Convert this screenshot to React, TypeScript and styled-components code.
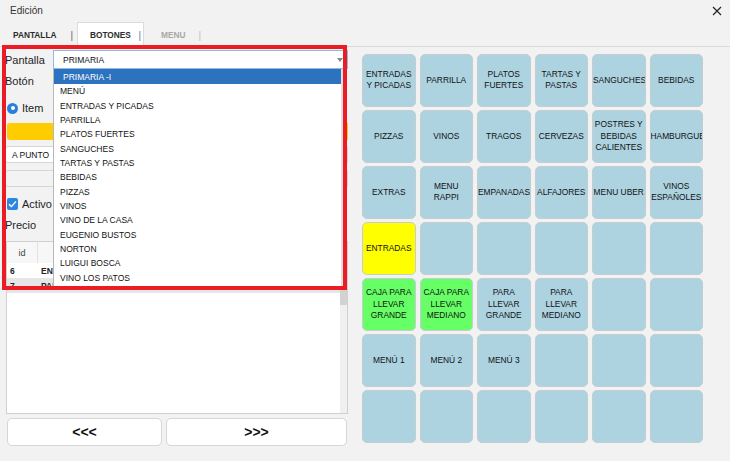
import React from "react";
import styled, { createGlobalStyle } from "styled-components";

const GlobalStyle = createGlobalStyle`
  html, body {
    margin: 0;
    padding: 0;
    background: #f2f2f2;
    font-family: "Liberation Sans", Arial, sans-serif;
  }
  * {
    box-sizing: border-box;
  }
`;

const Window = styled.div`
  width: 730px;
  height: 461px;
  overflow: hidden;
  display: flex;
  flex-direction: column;
  background: #f2f2f2;
`;

const TitleBar = styled.div`
  height: 20px;
  display: flex;
  align-items: center;
  justify-content: space-between;
  padding: 0 8px 0 10px;
`;

const Title = styled.span`
  font-size: 10px;
  color: #333;
`;

const CloseButton = styled.button`
  border: 0;
  background: transparent;
  padding: 0;
  width: 10px;
  height: 10px;
  display: flex;
  margin-top: 1px;
`;

const TabBar = styled.div`
  height: 27px;
  padding-top: 2px;
  display: flex;
  border-bottom: 1px solid #dadada;
`;

const Tab = styled.div<{ $w: number; $pl: number; $active?: boolean }>`
  width: ${(p) => p.$w}px;
  padding-left: ${(p) => p.$pl}px;
  display: flex;
  align-items: center;
  background: ${(p) => (p.$active ? "#fff" : "transparent")};
  border: 1px solid ${(p) => (p.$active ? "#dcdcdc" : "transparent")};
  border-bottom: 0;
  margin-bottom: -1px;
`;

const TabLabel = styled.span<{ $muted?: boolean }>`
  font-size: 8.3px;
  font-weight: bold;
  color: ${(p) => (p.$muted ? "#a8a8a8" : "#2b2b2b")};
`;

const Sep = styled.span<{ $mr: number; $color: string }>`
  margin-left: auto;
  margin-right: ${(p) => p.$mr}px;
  font-size: 10px;
  color: ${(p) => p.$color};
`;

const Body = styled.div`
  flex: 1;
  display: flex;
`;

const LeftPanel = styled.div`
  width: 348px;
  position: relative;
  padding: 3px 0 0 5px;
  display: flex;
  flex-direction: column;
`;

const Row = styled.div<{ $h: number; $mt?: number }>`
  height: ${(p) => p.$h}px;
  margin-top: ${(p) => p.$mt || 0}px;
  display: flex;
  align-items: center;
`;

const Label = styled.span<{ $w?: number }>`
  width: ${(p) => (p.$w ? `${p.$w}px` : "auto")};
  font-size: 11px;
  color: #1e1e1e;
`;

const SelectBox = styled.div`
  flex: 1;
  height: 19px;
  background: #fff;
  border: 1px solid #8dbbe6;
  display: flex;
  align-items: center;
  justify-content: space-between;
  padding: 0 4px 0 9px;
  font-size: 8.5px;
  color: #111;
`;

const Arrow = styled.span`
  width: 0;
  height: 0;
  border-left: 3px solid transparent;
  border-right: 3px solid transparent;
  border-top: 4px solid #888;
`;

const Radio = styled.span`
  width: 11px;
  height: 11px;
  border-radius: 50%;
  background: #2a7fd8;
  display: flex;
  align-items: center;
  justify-content: center;
  margin: 0 4px 0 2px;
  &::after {
    content: "";
    width: 4px;
    height: 4px;
    border-radius: 50%;
    background: #fff;
  }
`;

const Check = styled.span`
  width: 11px;
  height: 12px;
  border-radius: 2px;
  background: #2f86dd;
  display: flex;
  align-items: center;
  justify-content: center;
  margin: 0 4px 0 2px;
`;

const ColorBar = styled.div`
  height: 17px;
  margin: 7px 0 0 2px;
  background: #ffcc00;
  border-radius: 3px 0 0 3px;
`;

const FieldBox = styled.div<{ $mt: number; $bg: string }>`
  height: 17px;
  margin-top: ${(p) => p.$mt}px;
  background: ${(p) => p.$bg};
  border: 1px solid #d6d6d6;
  border-radius: 3px 0 0 3px;
  display: flex;
  align-items: center;
  padding-left: 6px;
  font-size: 8.5px;
  color: #111;
`;

const Table = styled.div`
  margin: 8px 0 0 1px;
  height: 173px;
  background: #fff;
  border: 1px solid #d0d0d0;
  display: flex;
`;

const TableBody = styled.div`
  flex: 1;
  display: flex;
  flex-direction: column;
`;

const TableRow = styled.div<{ $h: number; $bg: string }>`
  height: ${(p) => p.$h}px;
  background: ${(p) => p.$bg};
  display: grid;
  grid-template-columns: 31px 1fr;
  align-items: center;
  font-size: 8.5px;
`;

const HeadCell = styled.span`
  height: 100%;
  display: flex;
  align-items: center;
  justify-content: center;
  border-right: 1px solid #e2e2e2;
  color: #444;
  font-size: 9px;
`;

const DataCell = styled.span<{ $bold?: boolean }>`
  padding-left: 3px;
  font-weight: ${(p) => (p.$bold ? "bold" : "normal")};
  color: #222;
`;

const ScrollTrack = styled.div`
  width: 7px;
  background: #f0f0f0;
  display: flex;
  flex-direction: column;
`;

const ScrollThumb = styled.div`
  margin-top: 21px;
  height: 42px;
  background: #d2d2d2;
`;

const NavRow = styled.div`
  margin: 4px 0 0 2px;
  display: flex;
  gap: 4px;
`;

const NavButton = styled.button<{ $w: number }>`
  width: ${(p) => p.$w}px;
  height: 28px;
  background: #fff;
  border: 1px solid #d6d6d6;
  border-radius: 5px;
  font-family: "Liberation Sans", Arial, sans-serif;
  font-size: 14px;
  font-weight: bold;
  color: #111;
  padding: 0;
`;

const DropList = styled.div`
  position: absolute;
  left: 53px;
  top: 22px;
  width: 291px;
  height: 218px;
  background: #fff;
  border-left: 1px solid #b8b8b8;
  border-right: 3px solid #e0e0e0;
  overflow: hidden;
  z-index: 2;
`;

const DropItem = styled.div<{ $selected?: boolean }>`
  height: ${(p) => (p.$selected ? 15.3 : 14.33)}px;
  display: flex;
  align-items: center;
  padding-left: ${(p) => (p.$selected ? 9 : 6)}px;
  background: ${(p) => (p.$selected ? "#2c72bf" : "transparent")};
  color: ${(p) => (p.$selected ? "#fff" : "#111")};
  font-size: 8.5px;
`;

const Highlight = styled.div`
  position: absolute;
  left: 2px;
  top: -2px;
  width: 345px;
  height: 245px;
  border: 4px solid #ec1c24;
  pointer-events: none;
  z-index: 3;
`;

const RightPanel = styled.div`
  flex: 1;
  padding: 7px 0 0 14px;
`;

const Grid = styled.div`
  display: grid;
  grid-template-columns: repeat(6, 53.5px);
  grid-auto-rows: 52.7px;
  column-gap: 4px;
  row-gap: 3.3px;
`;

const tones = {
  blue: "#add3e1",
  yellow: "#ffff00",
  green: "#66ff66",
};

type Tone = keyof typeof tones;

const Cell = styled.div<{ $tone: Tone }>`
  background: ${(p) => tones[p.$tone]};
  border: 1px solid #c6cdd0;
  border-radius: 5px;
  display: flex;
  align-items: center;
  overflow: hidden;
`;

const CellLabel = styled.span`
  width: 100%;
  text-align: center;
  font-size: 8.4px;
  line-height: 11.5px;
  color: #111;
`;

const dropItems = [
  "MENÚ",
  "ENTRADAS Y PICADAS",
  "PARRILLA",
  "PLATOS FUERTES",
  "SANGUCHES",
  "TARTAS Y PASTAS",
  "BEBIDAS",
  "PIZZAS",
  "VINOS",
  "VINO DE LA CASA",
  "EUGENIO BUSTOS",
  "NORTON",
  "LUIGUI BOSCA",
  "VINO LOS PATOS",
  "TRUMPETER",
];

const buttons: { label: string; tone: Tone }[] = [
  { label: "ENTRADAS Y PICADAS", tone: "blue" },
  { label: "PARRILLA", tone: "blue" },
  { label: "PLATOS FUERTES", tone: "blue" },
  { label: "TARTAS Y PASTAS", tone: "blue" },
  { label: "SANGUCHES", tone: "blue" },
  { label: "BEBIDAS", tone: "blue" },
  { label: "PIZZAS", tone: "blue" },
  { label: "VINOS", tone: "blue" },
  { label: "TRAGOS", tone: "blue" },
  { label: "CERVEZAS", tone: "blue" },
  { label: "POSTRES Y BEBIDAS CALIENTES", tone: "blue" },
  { label: "HAMBURGUESAS", tone: "blue" },
  { label: "EXTRAS", tone: "blue" },
  { label: "MENU RAPPI", tone: "blue" },
  { label: "EMPANADAS", tone: "blue" },
  { label: "ALFAJORES", tone: "blue" },
  { label: "MENU UBER", tone: "blue" },
  { label: "VINOS ESPAÑOLES", tone: "blue" },
  { label: "ENTRADAS", tone: "yellow" },
  { label: "", tone: "blue" },
  { label: "", tone: "blue" },
  { label: "", tone: "blue" },
  { label: "", tone: "blue" },
  { label: "", tone: "blue" },
  { label: "CAJA PARA LLEVAR GRANDE", tone: "green" },
  { label: "CAJA PARA LLEVAR MEDIANO", tone: "green" },
  { label: "PARA LLEVAR GRANDE", tone: "blue" },
  { label: "PARA LLEVAR MEDIANO", tone: "blue" },
  { label: "", tone: "blue" },
  { label: "", tone: "blue" },
  { label: "MENÚ 1", tone: "blue" },
  { label: "MENÚ 2", tone: "blue" },
  { label: "MENÚ 3", tone: "blue" },
  { label: "", tone: "blue" },
  { label: "", tone: "blue" },
  { label: "", tone: "blue" },
  { label: "", tone: "blue" },
  { label: "", tone: "blue" },
  { label: "", tone: "blue" },
  { label: "", tone: "blue" },
  { label: "", tone: "blue" },
  { label: "", tone: "blue" },
];

const App = () => {
  return (
    <Window>
      <GlobalStyle />
      <TitleBar>
        <Title>Edición</Title>
        <CloseButton aria-label="Cerrar">
          <svg width="10" height="10" viewBox="0 0 10 10">
            <path d="M1 1 L9 9 M9 1 L1 9" stroke="#222" strokeWidth="1.2" />
          </svg>
        </CloseButton>
      </TitleBar>

      <TabBar>
        <Tab $w={77} $pl={12}>
          <TabLabel>PANTALLA</TabLabel>
          <Sep $mr={3} $color="#666">|</Sep>
        </Tab>
        <Tab $w={67} $pl={12} $active>
          <TabLabel>BOTONES</TabLabel>
          <Sep $mr={2} $color="#5a7fa8">|</Sep>
        </Tab>
        <Tab $w={60} $pl={16}>
          <TabLabel $muted>MENU</TabLabel>
          <Sep $mr={2} $color="#c0c0c0">|</Sep>
        </Tab>
      </TabBar>

      <Body>
        <LeftPanel>
          <Row $h={19}>
            <Label $w={48}>Pantalla</Label>
            <SelectBox>
              PRIMARIA
              <Arrow />
            </SelectBox>
          </Row>
          <Row $h={18} $mt={3}>
            <Label>Botón</Label>
          </Row>
          <Row $h={16} $mt={10}>
            <Radio />
            <Label>Item</Label>
          </Row>
          <ColorBar />
          <FieldBox $mt={6} $bg="#fff">A PUNTO</FieldBox>
          <FieldBox $mt={7} $bg="#f3f3f3" />
          <Row $h={15} $mt={9}>
            <Check>
              <svg width="9" height="8" viewBox="0 0 9 8">
                <path d="M1 4.2 L3.4 6.6 L8 1.4" stroke="#fff" strokeWidth="1.4" fill="none" />
              </svg>
            </Check>
            <Label>Activo</Label>
          </Row>
          <Row $h={16} $mt={6}>
            <Label>Precio</Label>
          </Row>
          <Table>
            <TableBody>
              <TableRow $h={21} $bg="#f7f7f7">
                <HeadCell>id</HeadCell>
                <DataCell />
              </TableRow>
              <TableRow $h={15} $bg="#fff">
                <DataCell $bold>6</DataCell>
                <DataCell $bold>ENTRADAS</DataCell>
              </TableRow>
              <TableRow $h={15} $bg="#e6e6e6">
                <DataCell $bold>7</DataCell>
                <DataCell $bold>PARRILLA</DataCell>
              </TableRow>
            </TableBody>
            <ScrollTrack>
              <ScrollThumb />
            </ScrollTrack>
          </Table>
          <NavRow>
            <NavButton $w={155}>&lt;&lt;&lt;</NavButton>
            <NavButton $w={181}>&gt;&gt;&gt;</NavButton>
          </NavRow>

          <DropList>
            <DropItem $selected>PRIMARIA -I</DropItem>
            {dropItems.map((item) => (
              <DropItem key={item}>{item}</DropItem>
            ))}
          </DropList>
          <Highlight />
        </LeftPanel>

        <RightPanel>
          <Grid>
            {buttons.map((b, i) => (
              <Cell key={i} $tone={b.tone}>
                <CellLabel>{b.label}</CellLabel>
              </Cell>
            ))}
          </Grid>
        </RightPanel>
      </Body>
    </Window>
  );
};

export default App;
